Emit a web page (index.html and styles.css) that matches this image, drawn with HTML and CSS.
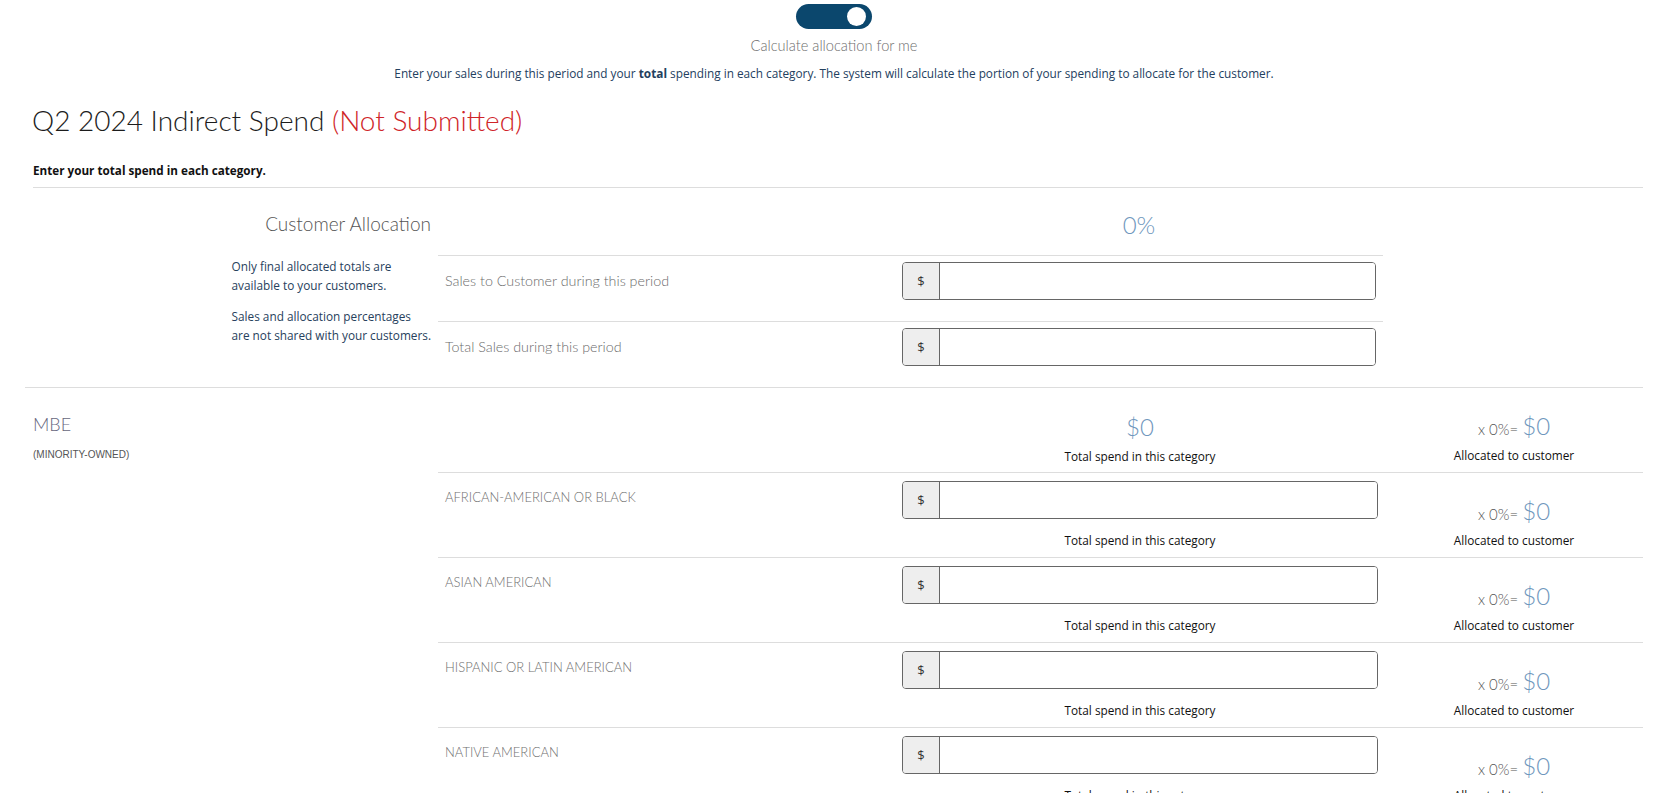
FILE: index.html
```html
<!DOCTYPE html>
<html>
<head>
  <meta charset="UTF-8">
  <title>Q2 2024 Indirect Spend</title>
  <link rel="stylesheet" href="styles.css">
</head>
<body>
  <div class="page">
    <div class="calc-toggle">
      <span class="switch"><span class="knob"></span></span>
      <div class="toggle-label">Calculate allocation for me</div>
      <p class="toggle-help">Enter your sales during this period and your <b>total</b> spending in each category. The system will calculate the portion of your spending to allocate for the customer.</p>
    </div>

    <h1 class="title">Q2 2024 Indirect Spend <span class="status">(Not Submitted)</span></h1>
    <p class="instructions">Enter your total spend in each category.</p>

    <section class="alloc">
      <div class="alloc-side">
        <h2>Customer Allocation</h2>
        <div class="notes">
          <p>Only final allocated totals are<br>available to your customers.</p>
          <p>Sales and allocation percentages<br>are not shared with your customers.</p>
        </div>
      </div>
      <div class="alloc-main">
        <div class="alloc-head">
          <div></div>
          <div class="big-num">0%</div>
        </div>
        <div class="alloc-row">
          <div class="row-label">Sales to Customer during this period</div>
          <div class="mid">
            <div class="money"><span class="addon">$</span><input type="text"></div>
          </div>
        </div>
        <div class="alloc-row">
          <div class="row-label">Total Sales during this period</div>
          <div class="mid">
            <div class="money"><span class="addon">$</span><input type="text"></div>
          </div>
        </div>
      </div>
    </section>

    <section class="cat">
      <div class="cat-side">
        <h3>MBE</h3>
        <div class="cat-sub">(MINORITY-OWNED)</div>
      </div>
      <div class="cat-main">
        <div class="cat-row">
          <div></div>
          <div class="mid total">
            <div class="big-num">$0</div>
            <div class="caption">Total spend in this category</div>
          </div>
          <div class="share">
            <div class="calc">x 0%= <span class="big-num">$0</span></div>
            <div class="caption">Allocated to customer</div>
          </div>
        </div>

        <div class="cat-row">
          <div class="cat-label">AFRICAN-AMERICAN OR BLACK</div>
          <div class="mid">
            <div class="money"><span class="addon">$</span><input type="text"></div>
            <div class="caption">Total spend in this category</div>
          </div>
          <div class="share">
            <div class="calc">x 0%= <span class="big-num">$0</span></div>
            <div class="caption">Allocated to customer</div>
          </div>
        </div>

        <div class="cat-row">
          <div class="cat-label">ASIAN AMERICAN</div>
          <div class="mid">
            <div class="money"><span class="addon">$</span><input type="text"></div>
            <div class="caption">Total spend in this category</div>
          </div>
          <div class="share">
            <div class="calc">x 0%= <span class="big-num">$0</span></div>
            <div class="caption">Allocated to customer</div>
          </div>
        </div>

        <div class="cat-row">
          <div class="cat-label">HISPANIC OR LATIN AMERICAN</div>
          <div class="mid">
            <div class="money"><span class="addon">$</span><input type="text"></div>
            <div class="caption">Total spend in this category</div>
          </div>
          <div class="share">
            <div class="calc">x 0%= <span class="big-num">$0</span></div>
            <div class="caption">Allocated to customer</div>
          </div>
        </div>

        <div class="cat-row">
          <div class="cat-label">NATIVE AMERICAN</div>
          <div class="mid">
            <div class="money"><span class="addon">$</span><input type="text"></div>
            <div class="caption">Total spend in this category</div>
          </div>
          <div class="share">
            <div class="calc">x 0%= <span class="big-num">$0</span></div>
            <div class="caption">Allocated to customer</div>
          </div>
        </div>

        <div class="cat-row">
          <div class="cat-label">OTHER MINORITY</div>
          <div class="mid">
            <div class="money"><span class="addon">$</span><input type="text"></div>
            <div class="caption">Total spend in this category</div>
          </div>
          <div class="share">
            <div class="calc">x 0%= <span class="big-num">$0</span></div>
            <div class="caption">Allocated to customer</div>
          </div>
        </div>
      </div>
    </section>
  </div>
</body>
</html>
```

FILE: styles.css
```css
body {
  margin: 0;
  font-family: "Open Sans", Arial, sans-serif;
  background-color: #fff;
  color: #333;
}

.page {
  padding: 0 33px 40px 25px;
}

/* top toggle */
.calc-toggle {
  text-align: center;
  padding-top: 4px;
}

.switch {
  display: inline-block;
  position: relative;
  width: 76px;
  height: 25px;
  border-radius: 13px;
  background-color: #0b476d;
  vertical-align: top;
}

.knob {
  position: absolute;
  top: 3px;
  right: 6px;
  width: 19px;
  height: 19px;
  border-radius: 50%;
  background-color: #fff;
}

.toggle-label {
  margin-top: 7px;
  font-family: Lato, "Open Sans", sans-serif;
  font-weight: 300;
  font-size: 14.6px;
  line-height: 20px;
  color: #6d6d6d;
}

.toggle-help {
  margin: 9px 0 0 0;
  font-size: 11.8px;
  line-height: 16px;
  color: #23405e;
}

.title {
  margin: 23px 0 0 7px;
  font-family: Lato, "Open Sans", sans-serif;
  font-weight: 300;
  font-size: 28px;
  line-height: 32px;
  color: #1c1c1c;
}

.status {
  color: #cf2428;
}

.instructions {
  margin: 26px 0 0 8px;
  font-size: 11.7px;
  font-weight: bold;
  line-height: 16px;
  color: #111;
  padding-bottom: 9px;
  border-bottom: 1px solid #ddd;
}

/* customer allocation block */
.alloc {
  display: flex;
  border-bottom: 1px solid #ddd;
}

.alloc-side {
  width: 413px;
  flex-shrink: 0;
  text-align: right;
  padding-right: 7px;
  box-sizing: border-box;
}

.alloc-side h2 {
  margin: 24px 0 0 0;
  font-family: Lato, "Open Sans", sans-serif;
  font-weight: 300;
  font-size: 19px;
  line-height: 24px;
  color: #555;
}

.notes {
  display: inline-block;
  text-align: left;
  margin-top: 21px;
}

.notes p {
  margin: 0 0 12px 0;
  font-size: 11.8px;
  line-height: 19px;
  color: #27415c;
}

.alloc-main {
  width: 945px;
}

.alloc-head {
  display: grid;
  grid-template-columns: 457px 488px;
  height: 67px;
}

.alloc-head .big-num {
  text-align: center;
  padding-top: 22px;
}

.alloc-row {
  display: grid;
  grid-template-columns: 457px 488px;
  border-top: 1px solid #ddd;
  height: 65px;
}

.row-label {
  padding: 15px 0 0 7px;
  font-family: Lato, "Open Sans", sans-serif;
  font-weight: 300;
  font-size: 14.3px;
  line-height: 20px;
  color: #6b6b6b;
}

.mid {
  padding: 6px 7px 0 7px;
}

.big-num {
  font-family: Lato, "Open Sans", sans-serif;
  font-weight: 300;
  font-size: 24px;
  line-height: 30px;
  color: #6f97bd;
}

/* dollar input */
.money {
  display: flex;
  height: 38px;
  border: 1px solid #666;
  border-radius: 4px;
  box-sizing: border-box;
  overflow: hidden;
}

.addon {
  width: 36px;
  flex-shrink: 0;
  background-color: #eee;
  border-right: 1px solid #666;
  text-align: center;
  font-size: 13px;
  line-height: 36px;
  color: #333;
}

.money input {
  flex: 1;
  border: none;
  outline: none;
  padding: 0 8px;
  font-size: 13px;
}

/* category block */
.cat {
  display: flex;
}

.cat-side {
  width: 413px;
  flex-shrink: 0;
  padding: 24px 0 0 8px;
  box-sizing: border-box;
}

.cat-side h3 {
  margin: 0;
  font-family: Lato, "Open Sans", sans-serif;
  font-weight: 300;
  font-size: 18px;
  line-height: 24px;
  color: #676780;
}

.cat-sub {
  margin-top: 13px;
  font-family: "Liberation Sans", Arial, sans-serif;
  font-size: 10px;
  line-height: 12px;
  color: #555;
}

.cat-main {
  flex: 1;
}

.cat-row {
  display: grid;
  grid-template-columns: 457px 490px 1fr;
  height: 84px;
  border-bottom: 1px solid #ddd;
}

.cat-label {
  padding: 15px 0 0 7px;
  font-family: Lato, "Open Sans", sans-serif;
  font-weight: 300;
  font-size: 13px;
  line-height: 18px;
  color: #707070;
}

.cat-row .mid {
  padding-top: 8px;
  text-align: center;
}

.cat-row .mid.total {
  padding-top: 24px;
}

.share {
  text-align: center;
  padding-top: 23px;
}

.calc {
  font-family: Lato, "Open Sans", sans-serif;
  font-weight: 300;
  font-size: 15px;
  line-height: 30px;
  color: #555;
}

.calc .big-num {
  display: inline;
}

.caption {
  margin-top: 6px;
  font-size: 11.8px;
  line-height: 16px;
  color: #111;
}

.share .caption {
  margin-top: 3px;
}

.cat-row .money + .caption {
  margin-top: 13px;
}
```
